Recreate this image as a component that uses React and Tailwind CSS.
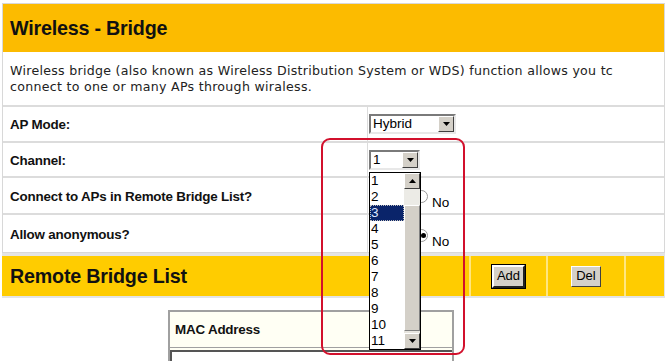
import React from "react";

function Arrow({ up }) {
  return (
    <svg width="7" height="4" viewBox="0 0 7 4" className="block">
      {up ? <path d="M0 4 L3.5 0 L7 4 Z" fill="#000" /> : <path d="M0 0 L7 0 L3.5 4 Z" fill="#000" />}
    </svg>
  );
}

function SelectBox({ value, w }) {
  return (
    <div
      className="flex items-stretch bg-white border-2 border-t-[#7a7a7a] border-l-[#7a7a7a] border-b-[#e8e8e8] border-r-[#e8e8e8] h-[20px]"
      style={{ width: w }}
    >
      <div className="flex-1 pl-[2px] text-[13.5px] leading-[16px] text-black">{value}</div>
      <div className="w-[16px] bg-[#d4d0c8] border border-t-[#fff] border-l-[#fff] border-b-[#404040] border-r-[#404040] flex items-center justify-center">
        <Arrow />
      </div>
    </div>
  );
}

export default function App() {
  const items = ["1", "2", "3", "4", "5", "6", "7", "8", "9", "10", "11"];
  const label = "border-r border-[#dcdcdc] flex items-center pl-[7px] pt-[3px] text-[13.4px] font-bold tracking-[-0.2px] text-[#111]";
  return (
    <div className="relative w-[672px] h-[361px] bg-white overflow-hidden font-['Liberation_Sans',Arial,sans-serif] text-black">
      <div className="ml-[2px] mt-[3px] w-[663px] border border-[#d8d8d8] bg-white">
        <div className="h-[48px] bg-[#fcbb00] flex items-center pl-[7px] pt-[1px] text-[19.7px] font-bold text-[#111] tracking-[-0.2px]">
          Wireless - Bridge
        </div>
        <div className="h-[55px] border-b-2 border-[#dcdcdc] pl-[7px] pt-[11px] text-[12.6px] tracking-[0.28px] leading-[16px] text-[#222] font-['DejaVu_Sans',sans-serif]">
          Wireless bridge (also known as Wireless Distribution System or WDS) function allows you tc
          <br />
          connect to one or many APs through wiraless.
        </div>
        <div className="grid grid-cols-[365px_1fr]">
          <div className={"h-[36px] border-b-2 " + label}>AP Mode:</div>
          <div className="h-[36px] border-b-2 border-[#dcdcdc] flex items-center pl-[1px]">
            <SelectBox value="Hybrid" w={87} />
          </div>
          <div className={"h-[35px] border-b-2 " + label}>Channel:</div>
          <div className="h-[35px] border-b-2 border-[#dcdcdc] flex items-center pl-[1px] pt-[1px]">
            <SelectBox value="1" w={51} />
          </div>
          <div className={"h-[37px] border-b-2 " + label}>Connect to APs in Remote Bridge List?</div>
          <div className="h-[37px] border-b-2 border-[#dcdcdc] flex items-end pb-0 pl-[64px] text-[13.5px]">No</div>
          <div className={"h-[37px] " + label}>Allow anonymous?</div>
          <div className="h-[37px] flex items-end pb-0 pl-[64px] text-[13.5px]">No</div>
        </div>
      </div>
      <div className="ml-[2px] w-[663px] bg-[#e4e4e4] pt-[3px] pb-[2px] pr-[1px]">
        <div className="h-[40px] flex bg-[#ffe680] gap-[2px]">
          <div className="w-[467px] bg-[#ffcc00] flex items-center pl-[8px] pt-[1px] text-[19.7px] font-bold text-[#111] tracking-[-0.2px]">
            Remote Bridge List
          </div>
          <div className="w-[75px] bg-[#ffcc00] flex items-center justify-center">
            <div className="w-[33px] h-[23px] bg-[#d4d0c8] border-2 border-t-[#fff] border-l-[#fff] border-b-[#222] border-r-[#222] flex items-center justify-center text-[13px] outline outline-1 outline-black">
              Add
            </div>
          </div>
          <div className="w-[76px] bg-[#ffcc00] flex items-center justify-center">
            <div className="w-[30px] h-[21px] bg-[#d4d0c8] border border-t-[#fff] border-l-[#fff] border-b-[#404040] border-r-[#404040] flex items-center justify-center text-[13px]">
              Del
            </div>
          </div>
          <div className="flex-1 bg-[#ffcc00]" />
        </div>
      </div>
      <div className="ml-[168px] mt-[12px] w-[286px] border-2 border-[#a0a0a0] border-b-0 bg-[#fffff4]">
        <div className="h-[36px] flex items-center pl-[5px] pt-[2px] text-[13.4px] font-bold tracking-[-0.2px] text-[#111] border-b border-[#a0a0a0]">MAC Address</div>
        <div className="mt-[2px] h-[20px] bg-white border-t-2 border-l-2 border-[#555]" />
      </div>

      {/* radios partially hidden behind list */}
      <div className="absolute left-[415px] top-[190px] w-[13px] h-[13px] rounded-full border border-[#999] bg-white" />
      <div className="absolute left-[415px] top-[229px] w-[13px] h-[13px] rounded-full border border-[#999] bg-white flex items-center justify-center">
        <div className="ml-[3px] w-[5px] h-[5px] rounded-full bg-black" />
      </div>

      {/* dropdown list */}
      <div className="absolute left-[369px] top-[172px] w-[52px] h-[178px] bg-white border border-black flex">
        <div className="flex-1 flex flex-col text-[13.5px]">
          {items.map((it) => (
            <div
              key={it}
              className={
                it === "3"
                  ? "h-[16px] leading-[16px] bg-[#0a246a] text-[#dfe6ff] pl-[1px] outline outline-1 outline-dotted outline-[#c0c0c0] -outline-offset-1"
                  : "h-[16px] leading-[16px] pl-[1px]"
              }
            >
              {it}
            </div>
          ))}
        </div>
        <div className="w-[16px] flex flex-col bg-[#e6e4de]">
          <div className="h-[16px] bg-[#d4d0c8] border border-t-[#fff] border-l-[#fff] border-b-[#404040] border-r-[#404040] flex items-center justify-center">
            <Arrow up />
          </div>
          <div className="h-[16px] bg-[#ecebe6]" />
          <div className="flex-1 bg-[#d4d0c8] border border-t-[#fff] border-l-[#fff] border-b-[#808080] border-r-[#808080]" />
          <div className="h-[2px]" />
          <div className="h-[16px] bg-[#d4d0c8] border border-t-[#fff] border-l-[#fff] border-b-[#404040] border-r-[#404040] flex items-center justify-center">
            <Arrow />
          </div>
        </div>
      </div>

      {/* red highlight */}
      <div className="absolute left-[321px] top-[138px] w-[144px] h-[217px] border-[2.5px] border-[#d2102c] rounded-[9px] pointer-events-none" />
    </div>
  );
}
